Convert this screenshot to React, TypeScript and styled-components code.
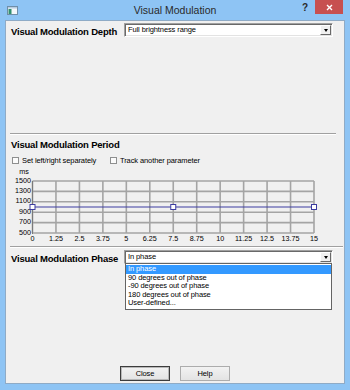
import styled, { createGlobalStyle } from "styled-components";

const GlobalStyle = createGlobalStyle`
  html, body {
    margin: 0;
    padding: 0;
    width: 350px;
    height: 390px;
    overflow: hidden;
    background: #8ec4f4;
  }
`;

const X0 = 32.5;
const X_STEP = 281.5 / 12;
const Y0 = 181;
const Y_STEP = 10.4;
const xLabels = ["0", "1.25", "2.5", "3.75", "5", "6.25", "7.5", "8.75", "10", "11.25", "12.5", "13.75", "15"];
const yLabels = ["1500", "1300", "1100", "900", "700", "500"];
const phases = ["In phase", "90 degrees out of phase", "-90 degrees out of phase", "180 degrees out of phase", "User-defined..."];

const TitleIcon = () => (
  <svg width="11" height="9" viewBox="0 0 11 9">
    <rect x="0.5" y="0.5" width="10" height="8" fill="#f3f7fa" stroke="#6f8ea8" />
    <rect x="1" y="1" width="9" height="1.5" fill="#b7cde0" />
    <rect x="1.5" y="3" width="3" height="5" fill="#2f8f6f" />
  </svg>
);

const PeriodChart = () => {
  const xs = xLabels.map((_, i) => X0 + i * X_STEP);
  const ys = yLabels.map((_, i) => Y0 + i * Y_STEP);
  const xEnd = xs[xs.length - 1];
  const yEnd = ys[ys.length - 1];
  const lineY = 207;
  return (
    <ChartSvg width="338" height="80" viewBox="6 165 338 80">
      {ys.map((y) => (
        <line key={"h" + y} x1={X0} x2={xEnd} y1={y} y2={y} stroke="#a4a4a4" strokeWidth="1.6" />
      ))}
      {xs.map((x) => (
        <line key={"v" + x} x1={x} x2={x} y1={Y0} y2={yEnd} stroke="#a4a4a4" strokeWidth="1.6" />
      ))}
      <line x1={X0} x2={X0} y1={Y0} y2={yEnd + 1} stroke="#7a7a7a" strokeWidth="1" />
      <text x="24" y="171" textAnchor="middle" dominantBaseline="central">ms</text>
      {yLabels.map((label, i) => (
        <text key={label} x="31" y={ys[i] - 1} textAnchor="end" dominantBaseline="central">
          {label}
        </text>
      ))}
      {xLabels.map((label, i) => (
        <text key={label} x={xs[i]} y="238.5" textAnchor="middle" dominantBaseline="central">
          {label}
        </text>
      ))}
      <line x1={X0} x2={xEnd} y1={lineY} y2={lineY} stroke="#3c3ca0" strokeWidth="1" />
      {[xs[0], xs[6], xs[12]].map((x) => (
        <rect key={"p" + x} x={x - 2.5} y={lineY - 2.5} width="5" height="5" fill="#ffffff" stroke="#3c3ca0" strokeWidth="1" />
      ))}
    </ChartSvg>
  );
};

const Combo = ({ value, open }: { value: string; open?: boolean }) => (
  <ComboBox>
    <ComboText>{value}</ComboText>
    <ComboArrow>
      <ArrowGlyph />
    </ComboArrow>
    {open && (
      <DropList>
        {phases.map((p) => (
          <DropItem key={p} $selected={p === value}>
            {p}
          </DropItem>
        ))}
      </DropList>
    )}
  </ComboBox>
);

export default function App() {
  return (
    <>
      <GlobalStyle />
      <Window>
        <TitleBar>
          <TitleLeft>
            <TitleIcon />
          </TitleLeft>
          <TitleText>Visual Modulation</TitleText>
          <TitleRight>
            <HelpGlyph>?</HelpGlyph>
            <CloseBox>
              <svg width="7" height="7" viewBox="0 0 7 7">
                <path d="M1 1 L6 6 M6 1 L1 6" stroke="#ffffff" strokeWidth="1.4" />
              </svg>
            </CloseBox>
          </TitleRight>
        </TitleBar>
        <Client>
          <FieldRow $top={2}>
            <FieldLabel>Visual Modulation Depth</FieldLabel>
            <Combo value="Full brightness range" />
          </FieldRow>

          <Separator $top={96} $right={8} />
          <SectionTitle>Visual Modulation Period</SectionTitle>
          <CheckRow>
            <CheckItem $width={98}>
              <CheckBox />
              <CheckLabel>Set left/right separately</CheckLabel>
            </CheckItem>
            <CheckItem>
              <CheckBox />
              <CheckLabel>Track another parameter</CheckLabel>
            </CheckItem>
          </CheckRow>
          <PeriodChart />

          <Separator $top={1} $right={1} />
          <FieldRow $top={2} $raised>
            <FieldLabel>Visual Modulation Phase</FieldLabel>
            <Combo value="In phase" open />
          </FieldRow>

          <ButtonRow>
            <DialogButton $default>Close</DialogButton>
            <DialogButton>Help</DialogButton>
          </ButtonRow>
        </Client>
      </Window>
    </>
  );
}

const Window = styled.div`
  width: 350px;
  height: 390px;
  box-sizing: border-box;
  padding: 0 5px 6px 5px;
  background: #8ec4f4;
  display: flex;
  flex-direction: column;
  font-family: "Liberation Sans", Arial, sans-serif;
  color: #000;
`;

const TitleBar = styled.div`
  height: 20px;
  flex-shrink: 0;
  display: grid;
  grid-template-columns: 1fr auto 1fr;
  align-items: start;
`;

const TitleLeft = styled.div`
  padding: 6px 0 0 2px;
  display: flex;
`;

const TitleText = styled.div`
  font-family: "Liberation Sans", Arial, sans-serif;
  font-size: 10.5px;
  line-height: 20px;
  color: #2a2a2a;
`;

const TitleRight = styled.div`
  display: flex;
  justify-content: flex-end;
  align-items: flex-start;
  padding-right: 2px;
`;

const HelpGlyph = styled.span`
  width: 14px;
  margin-right: 3px;
  text-align: center;
  font-size: 10px;
  font-weight: 700;
  line-height: 16px;
  color: #2a2a2a;
`;

const CloseBox = styled.div`
  width: 28px;
  height: 14px;
  background: #c75050;
  display: flex;
  align-items: center;
  justify-content: center;
`;

const Client = styled.div`
  flex: 1;
  background: #f0f0f0;
  border: 1px solid #8fabc6;
  display: flex;
  flex-direction: column;
  position: relative;
`;

const FieldRow = styled.div<{ $top: number; $raised?: boolean }>`
  margin-top: ${(p) => p.$top}px;
  height: 14px;
  padding-left: 5px;
  display: flex;
  align-items: center;
  position: relative;
  z-index: ${(p) => (p.$raised ? 2 : 1)};
`;

const FieldLabel = styled.div`
  width: 113px;
  font-size: 9.5px;
  font-weight: 700;
  letter-spacing: -0.2px;
  padding-top: 2px;
  white-space: nowrap;
`;

const ComboBox = styled.div`
  position: relative;
  width: 209px;
  height: 14px;
  box-sizing: border-box;
  background: #ffffff;
  border: 1px solid;
  border-color: #a0a0a0 #ffffff #ffffff #a0a0a0;
  box-shadow: inset 1px 1px 0 #696969, inset -1px -1px 0 #e3e3e3;
  display: flex;
  align-items: center;
`;

const ComboText = styled.div`
  flex: 1;
  padding-left: 3px;
  font-size: 7.5px;
  letter-spacing: -0.1px;
  line-height: 12px;
  white-space: nowrap;
`;

const ComboArrow = styled.div`
  width: 11px;
  height: 10px;
  margin-right: 1px;
  box-sizing: border-box;
  background: #f0f0f0;
  border: 1px solid;
  border-color: #ffffff #696969 #696969 #ffffff;
  display: flex;
  align-items: center;
  justify-content: center;
`;

const ArrowGlyph = styled.div`
  width: 0;
  height: 0;
  border-left: 2.5px solid transparent;
  border-right: 2.5px solid transparent;
  border-top: 3px solid #000;
`;

const DropList = styled.div`
  position: absolute;
  top: 100%;
  left: 0;
  right: 0;
  box-sizing: border-box;
  background: #ffffff;
  border: 1px solid #646464;
  padding: 1px 0;
`;

const DropItem = styled.div<{ $selected?: boolean }>`
  height: 8.6px;
  line-height: 8.6px;
  padding-left: 2px;
  font-size: 7.5px;
  letter-spacing: -0.1px;
  white-space: nowrap;
  background: ${(p) => (p.$selected ? "#3399ff" : "transparent")};
  color: ${(p) => (p.$selected ? "#ffffff" : "#000")};
`;

const Separator = styled.div<{ $top: number; $right: number }>`
  margin: ${(p) => p.$top}px ${(p) => p.$right}px 0 4px;
  border-top: 1px solid #a0a0a0;
  border-bottom: 1px solid #ffffff;
`;

const SectionTitle = styled.div`
  margin-top: 4px;
  padding-left: 5px;
  height: 12px;
  line-height: 12px;
  font-size: 9.5px;
  font-weight: 700;
  letter-spacing: -0.2px;
`;

const CheckRow = styled.div`
  margin-top: 4px;
  height: 10px;
  padding-left: 6px;
  display: flex;
  align-items: center;
`;

const CheckItem = styled.div<{ $width?: number }>`
  width: ${(p) => (p.$width ? `${p.$width}px` : "auto")};
  display: flex;
  align-items: center;
  gap: 3px;
`;

const CheckBox = styled.div`
  width: 7px;
  height: 7px;
  box-sizing: border-box;
  border: 1px solid #8e8f8f;
  background: #fbfbfb;
`;

const CheckLabel = styled.span`
  font-size: 7.5px;
  letter-spacing: -0.1px;
  white-space: nowrap;
`;

const ChartSvg = styled.svg`
  display: block;
  flex-shrink: 0;
  font-family: "Liberation Sans", Arial, sans-serif;
  font-size: 7.2px;
  fill: #000;
`;

const ButtonRow = styled.div`
  margin-top: auto;
  padding-bottom: 2px;
  display: flex;
  justify-content: center;
  gap: 10px;
`;

const DialogButton = styled.div<{ $default?: boolean }>`
  width: 50px;
  height: 15px;
  box-sizing: border-box;
  background: linear-gradient(#f2f2f2, #e3e3e3);
  border: 1px solid ${(p) => (p.$default ? "#3c3c3c" : "#acacac")};
  box-shadow: ${(p) => (p.$default ? "inset 0 0 0 1px #b8b8b8" : "none")};
  display: flex;
  align-items: center;
  justify-content: center;
  font-size: 7.5px;
  letter-spacing: -0.1px;
`;
